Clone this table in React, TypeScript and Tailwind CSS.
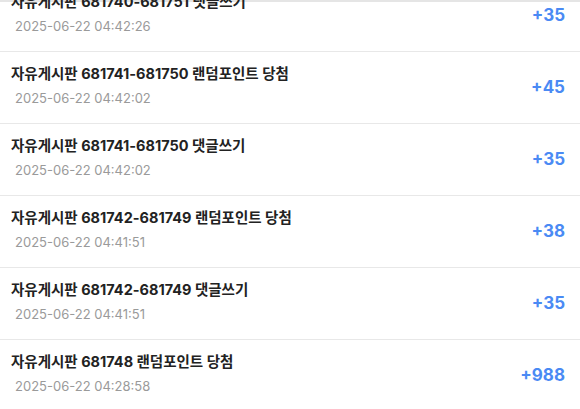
import React from 'react';

interface PointLog {
  title: string;
  date: string;
  amount: number;
}

const logs: PointLog[] = [
  { title: '자유게시판 681740-681751 댓글쓰기', date: '2025-06-22 04:42:26', amount: 35 },
  { title: '자유게시판 681741-681750 랜덤포인트 당첨', date: '2025-06-22 04:42:02', amount: 45 },
  { title: '자유게시판 681741-681750 댓글쓰기', date: '2025-06-22 04:42:02', amount: 35 },
  { title: '자유게시판 681742-681749 랜덤포인트 당첨', date: '2025-06-22 04:41:51', amount: 38 },
  { title: '자유게시판 681742-681749 댓글쓰기', date: '2025-06-22 04:41:51', amount: 35 },
  { title: '자유게시판 681748 랜덤포인트 당첨', date: '2025-06-22 04:28:58', amount: 988 },
];

export default function App() {
  return (
    <div
      className="relative h-[409px] w-[580px] overflow-hidden bg-white"
      style={{ fontFamily: 'Inter, "Noto Sans CJK KR", sans-serif' }}
    >
      {/* top edge line of the scroll area */}
      <div className="absolute left-0 right-0 top-0 h-[2px] bg-[#e5e5e5]" />
      <ul className="-mt-[20px]">
        {logs.map((log, i) => (
          <li
            key={i}
            className="relative flex h-[72px] items-center justify-between border-b border-[#e8e8e8] pl-[11px] pr-[15px]"
          >
            <div className="flex flex-col pb-[3px]">
              <span className="text-[14.5px] font-bold leading-[20px] text-[#222222]">{log.title}</span>
              <span className="mt-[4px] pl-[4px] text-[13px] leading-[20px] text-[#9a9a9a]">{log.date}</span>
            </div>
            <span className="text-[17px] font-bold text-[#4a8af4]">+{log.amount}</span>
          </li>
        ))}
      </ul>
    </div>
  );
}
